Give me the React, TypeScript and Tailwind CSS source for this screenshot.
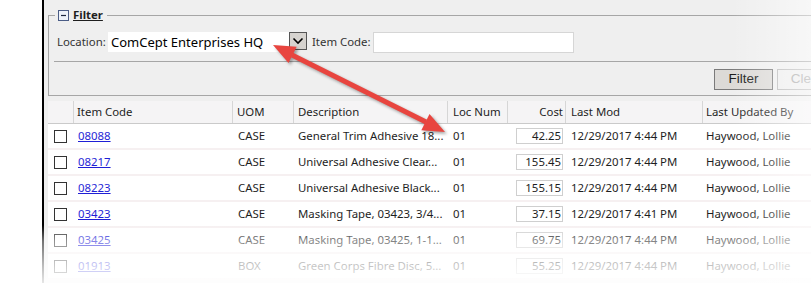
import React from "react";

type RowProps = {
  code: string;
  uom: string;
  desc: string;
  loc: string;
  cost: string;
  mod: string;
  by: string;
};

const rows: RowProps[] = [
  { code: "08088", uom: "CASE", desc: "General Trim Adhesive 18...", loc: "01", cost: "42.25", mod: "12/29/2017 4:44 PM", by: "Haywood, Lollie" },
  { code: "08217", uom: "CASE", desc: "Universal Adhesive Clear...", loc: "01", cost: "155.45", mod: "12/29/2017 4:44 PM", by: "Haywood, Lollie" },
  { code: "08223", uom: "CASE", desc: "Universal Adhesive Black...", loc: "01", cost: "155.15", mod: "12/29/2017 4:44 PM", by: "Haywood, Lollie" },
  { code: "03423", uom: "CASE", desc: "Masking Tape, 03423, 3/4...", loc: "01", cost: "37.15", mod: "12/29/2017 4:41 PM", by: "Haywood, Lollie" },
  { code: "03425", uom: "CASE", desc: "Masking Tape, 03425, 1-1...", loc: "01", cost: "69.75", mod: "12/29/2017 4:44 PM", by: "Haywood, Lollie" },
  { code: "01913", uom: "BOX", desc: "Green Corps Fibre Disc, 5...", loc: "01", cost: "55.25", mod: "12/29/2017 4:44 PM", by: "Haywood, Lollie" },
];

const cols = "grid grid-cols-[25px_159px_61px_154px_60px_58px_137px_140px]";

function Arrow() {
  // double headed red arrow from the location box to the loc num column
  return (
    <svg
      className="pointer-events-none absolute left-0 top-0 drop-shadow-[2px_2px_1.5px_rgba(0,0,0,0.35)]"
      width="811"
      height="283"
      viewBox="0 0 811 283"
    >
      <line x1="292" y1="55" x2="426" y2="122" stroke="#e8453f" strokeWidth="5" />
      <polygon points="273,45 288.5,63 296.7,46.8" fill="#e8453f" />
      <polygon points="445,132 421.3,130.2 429.5,114" fill="#e8453f" />
    </svg>
  );
}

export default function App() {
  return (
    <div className="relative flex h-[283px] w-[811px] overflow-hidden bg-white font-['Noto_Sans',sans-serif] text-[11.4px] text-[#1e1e1e]">
      <div className="w-[42px] shrink-0 bg-white" />
      <div className="w-[2px] shrink-0 bg-black" />
      <div className="w-[900px] shrink-0 bg-[#efefef] pl-[4px]">
        <fieldset className="mt-[7px] w-[795px] border border-[#a6a6a6] px-0 pb-[5px]">
          <legend className="ml-[6px] px-[3px] pr-[4px]">
            <span className="flex h-[16px] items-center gap-[4px]">
              <svg width="11" height="11" viewBox="0 0 11 11">
                <rect x="0.5" y="0.5" width="10" height="10" fill="#eef3fb" stroke="#4b5d86" />
                <line x1="3" y1="5.5" x2="8" y2="5.5" stroke="#1c2740" strokeWidth="1.2" />
              </svg>
              <span className="font-bold underline">Filter</span>
            </span>
          </legend>
          <div className="mt-[9px] flex h-[20px] items-center">
            <span className="ml-[8px] w-[51px] whitespace-nowrap text-[#333]">Location:</span>
            <div className="flex h-[20px] w-[181px] items-center whitespace-nowrap bg-white pl-[3px] text-[13px] leading-none text-black">
              ComCept Enterprises HQ
            </div>
            <div className="flex h-[18px] w-[18px] items-center justify-center self-start border border-[#555] bg-[#d6d3cf]">
              <svg width="12" height="8" viewBox="0 0 12 8">
                <polyline points="1.5,1.5 6,6 10.5,1.5" fill="none" stroke="#000" strokeWidth="1.6" />
              </svg>
            </div>
            <span className="ml-[5px] w-[61px] whitespace-nowrap text-[#333]">Item Code:</span>
            <div className="h-[21px] w-[201px] border border-[#d6d6d6] bg-white" />
          </div>
          <div className="ml-[5px] mt-[9px] border-t border-[#a6a6a6]" />
          <div className="mr-[5px] mt-[7px] flex justify-end gap-[4px] font-['Liberation_Sans',sans-serif] text-[13.5px]">
            <div className="flex h-[21px] w-[59px] items-center justify-center border border-[#7a7a7a] bg-[#dcdad7] text-[#1a1a1a]">
              Filter
            </div>
            <div className="flex h-[21px] w-[60px] items-center justify-center border border-[#b8b8b8] bg-[#eeeeee] text-[#a6a6a6]">
              Clear
            </div>
          </div>
        </fieldset>

        <div className="mt-[5px] w-[794px]">
          <div className={`${cols} h-[23px] border-b border-[#cacaca] bg-[#f5f4f5]`}>
            <div />
            <div className="flex items-center border-l border-[#d6d6d6] pl-[3px]">Item Code</div>
            <div className="flex items-center border-l border-[#d6d6d6] pl-[4px]">UOM</div>
            <div className="flex items-center border-l border-[#d6d6d6] pl-[4px]">Description</div>
            <div className="flex items-center border-l border-[#d6d6d6] pl-[5px]">Loc Num</div>
            <div className="flex items-center justify-end border-l border-[#d6d6d6] pr-[2px]">Cost</div>
            <div className="flex items-center border-l border-[#d6d6d6] pl-[5px]">Last Mod</div>
            <div className="flex items-center border-l border-[#d6d6d6] pl-[3px]">Last Updated By</div>
          </div>
          {rows.map((r) => (
            <div key={r.code} className={`${cols} h-[26px] border-b-2 border-[#f6f0f1] bg-white`}>
              <div className="flex items-center pl-[6px]">
                <div className="h-[13px] w-[13px] border border-[#333] bg-white" />
              </div>
              <div className="flex items-center pl-[5px]">
                <span className="text-[#1f1fd6] underline">{r.code}</span>
              </div>
              <div className="flex items-center pl-[6px]">{r.uom}</div>
              <div className="flex items-center pl-[5px] whitespace-nowrap">{r.desc}</div>
              <div className="flex items-center pl-[6px]">{r.loc}</div>
              <div className="flex items-center pl-[9px]">
                <div className="flex h-[16px] w-[47px] items-center justify-end border border-[#cfcfcf] bg-white pr-[1px]">
                  {r.cost}
                </div>
              </div>
              <div className="flex items-center pl-[6px] whitespace-nowrap">{r.mod}</div>
              <div className="flex items-center pl-[4px] whitespace-nowrap">{r.by}</div>
            </div>
          ))}
        </div>
      </div>

      <Arrow />

      <div className="pointer-events-none absolute right-0 top-0 h-[283px] w-[80px] bg-[linear-gradient(to_right,rgba(255,255,255,0),rgba(255,255,255,0.5))]" />
      <div className="pointer-events-none absolute left-0 top-[225px] h-[58px] w-[811px] bg-[linear-gradient(to_bottom,rgba(255,255,255,0)_0px,rgba(255,255,255,0.45)_16px,rgba(255,255,255,0.75)_42px,rgba(255,255,255,0.9)_58px)]" />
    </div>
  );
}
